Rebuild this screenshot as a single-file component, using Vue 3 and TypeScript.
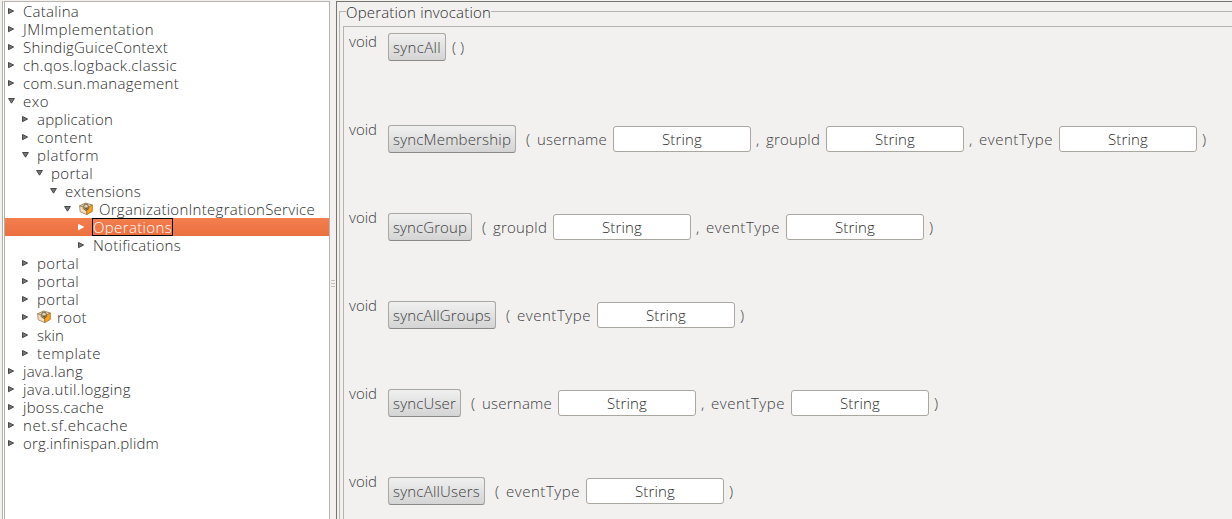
<script setup lang="ts">
interface TreeNode {
  label: string
  depth: number
  width: number
  open?: boolean
  bean?: boolean
  selected?: boolean
}

interface Param {
  name: string
  width: number
}

interface Operation {
  name: string
  width: number
  params: Param[]
}

const nodes: TreeNode[] = [
  { label: 'Catalina', depth: 0, width: 56 },
  { label: 'JMImplementation', depth: 0, width: 131 },
  { label: 'ShindigGuiceContext', depth: 0, width: 145 },
  { label: 'ch.qos.logback.classic', depth: 0, width: 154 },
  { label: 'com.sun.management', depth: 0, width: 156 },
  { label: 'exo', depth: 0, width: 26, open: true },
  { label: 'application', depth: 1, width: 76 },
  { label: 'content', depth: 1, width: 56 },
  { label: 'platform', depth: 1, width: 62, open: true },
  { label: 'portal', depth: 2, width: 42, open: true },
  { label: 'extensions', depth: 3, width: 76, open: true },
  { label: 'OrganizationIntegrationService', depth: 4, width: 216, open: true, bean: true },
  { label: 'Operations', depth: 5, width: 79, selected: true },
  { label: 'Notifications', depth: 5, width: 88 },
  { label: 'portal', depth: 1, width: 42 },
  { label: 'portal', depth: 1, width: 42 },
  { label: 'portal', depth: 1, width: 42 },
  { label: 'root', depth: 1, width: 30, bean: true },
  { label: 'skin', depth: 1, width: 27 },
  { label: 'template', depth: 1, width: 64 },
  { label: 'java.lang', depth: 0, width: 60 },
  { label: 'java.util.logging', depth: 0, width: 108 },
  { label: 'jboss.cache', depth: 0, width: 81 },
  { label: 'net.sf.ehcache', depth: 0, width: 105 },
  { label: 'org.infinispan.plidm', depth: 0, width: 136 },
]

const username: Param = { name: 'username', width: 70 }
const groupId: Param = { name: 'groupId', width: 54 }
const eventType: Param = { name: 'eventType', width: 74 }

const operations: Operation[] = [
  { name: 'syncAll', width: 48, params: [] },
  { name: 'syncMembership', width: 118, params: [username, groupId, eventType] },
  { name: 'syncGroup', width: 74, params: [groupId, eventType] },
  { name: 'syncAllGroups', width: 98, params: [eventType] },
  { name: 'syncUser', width: 63, params: [username, eventType] },
  { name: 'syncAllUsers', width: 87, params: [eventType] },
]

// Spreads the letters of a label so that it takes up the given width.
const vFit = {
  mounted(el: HTMLElement, binding: { value: number }) {
    const count = (el.textContent ?? '').length
    const natural = el.getBoundingClientRect().width
    el.style.letterSpacing = `${(binding.value - natural) / count}px`
  },
}
</script>

<template>
  <div class="window">
    <div class="tree">
      <div
        v-for="(node, i) in nodes"
        :key="i"
        class="node"
        :class="{ selected: node.selected }"
        :style="{ paddingLeft: `${node.depth * 14 + 2}px` }"
      >
        <svg class="arrow" width="9" height="9" viewBox="0 0 9 9">
          <path v-if="node.open" d="M1.6 1.5H7.4L4.5 6.2Z" />
          <path v-else d="M1.5 1.5L6.6 4L1.5 6.7Z" />
        </svg>
        <svg v-if="node.bean" class="bean" width="14" height="14" viewBox="0 0 14 14">
          <path d="M.6 3.8L6.5 1L13.3 3L7.8 6.4Z" fill="#e9d3ad" stroke="#8d754e" stroke-width=".8" />
          <path d="M.6 3.8L7.8 6.4V12.6L1.2 9.8Z" fill="#f3dfbd" stroke="#98805a" stroke-width=".8" />
          <path d="M7.8 6.4L13.3 3V9.4L7.8 12.6Z" fill="#fba31b" stroke="#a87014" stroke-width=".8" />
          <circle cx="7" cy="4.4" r="2.3" fill="#e3d2b0" stroke="#5f503c" stroke-width=".9" />
          <path d="M3.6 6.2L7 8.6L10.2 6.2M7 5V8" fill="none" stroke="#6c5538" stroke-width=".9" />
        </svg>
        <span class="label"><span v-fit="node.width">{{ node.label }}</span></span>
      </div>
    </div>
    <div class="divider"><i /><i /><i /></div>
    <div class="panel">
      <fieldset>
        <legend><span v-fit="145">Operation invocation</span></legend>
        <div class="operations">
          <div v-for="op in operations" :key="op.name" class="operation" :class="{ bare: !op.params.length }">
            <span class="type"><span v-fit="28">void</span></span>
            <button type="button"><span v-fit="op.width">{{ op.name }}</span></button>
            <span v-if="!op.params.length" class="empty">( )</span>
            <template v-else>
              <template v-for="(param, i) in op.params" :key="param.name">
                <span class="sep" :class="{ first: i === 0 }">{{ i === 0 ? '(' : ',' }}</span>
                <span class="name" :style="{ width: `${param.width + 6}px` }">
                  <span v-fit="param.width">{{ param.name }}</span>
                </span>
                <span class="field"><span v-fit="40">String</span></span>
              </template>
              <span class="close">)</span>
            </template>
          </div>
        </div>
      </fieldset>
    </div>
  </div>
</template>

<style>
html,
body {
  overflow: hidden;
  background: #f2f1f0;
}
</style>

<style scoped>
.window {
  box-sizing: border-box;
  width: 1232px;
  height: 519px;
  padding-left: 2px;
  display: flex;
  overflow: hidden;
  background: #f2f1f0;
  color: #2c2c2c;
  font: 300 15px/18px 'Open Sans', 'Noto Sans', sans-serif;
  white-space: nowrap;
}

.tree {
  box-sizing: border-box;
  width: 328px;
  flex: none;
  border-left: 3px double #b3b0aa;
  border-right: 1px solid #b8b5b0;
  background: #fff;
  margin-top: 1px;
  border-top: 1px solid #b8b5b0;
}

.node {
  display: flex;
  height: 18px;
}

.node.selected {
  background: linear-gradient(#f37e4e, #ec7040);
  color: #fff;
}

.arrow {
  flex: none;
  margin: 5px 7px 0 0;
  fill: #777;
  stroke: #484848;
}

.selected .arrow {
  fill: #fff;
  stroke: #fff;
}

.bean {
  flex: none;
  margin: 2px 6px 0 0;
}

.selected .label {
  height: 16px;
  line-height: 16px;
  outline: 1px solid #000;
  margin-top: 1px;
}

.divider {
  width: 6px;
  flex: none;
  display: flex;
  flex-direction: column;
  align-items: center;
  padding-top: 280px;
  gap: 2px;
  box-sizing: border-box;
}

.divider i {
  width: 4px;
  height: 1px;
  background: #c3c0bc;
}

.panel {
  box-sizing: border-box;
  flex: 1;
  height: 540px;
  margin-top: 1px;
  border-left: 1px solid #77756f;
  border-top: 1px solid #77756f;
  padding-left: 2px;
}

fieldset {
  height: 550px;
  box-sizing: border-box;
  margin: 0;
  min-width: 0;
  padding: 5px 0 0 3px;
  border: 1px solid #b8b5b0;
  border-right: 0;
}

legend {
  height: 19px;
  padding: 0;
  margin-left: 3px;
  line-height: 21px;
}

.operations {
  border-left: 1px solid #b8b5b0;
  border-top: 1px solid #b8b5b0;
  height: 530px;
}

.operation {
  display: flex;
  height: 88px;
  padding-left: 5px;
  box-sizing: border-box;
  padding-top: 10px;
  color: #404040;
}

.operation.bare {
  padding-top: 6px;
}

.type {
  width: 39px;
  flex: none;
  margin-top: -5px;
}

.bare .type {
  margin-top: -1px;
}

button {
  box-sizing: border-box;
  height: 28px;
  padding: 0 4px;
  border: 1px solid #aaa8a4;
  border-bottom-color: #8c8a87;
  border-radius: 3px;
  background: linear-gradient(#f0f0f0, #d4d4d4);
  color: inherit;
  font: inherit;
}

.sep,
.name,
.close,
.empty {
  line-height: 28px;
}

.empty {
  margin-left: 6px;
}

.sep {
  width: 10px;
  margin-left: 5px;
}

.sep.first {
  margin-left: 10px;
  width: 11px;
}

.field {
  box-sizing: border-box;
  width: 138px;
  height: 26px;
  margin-top: 1px;
  border: 1px solid #aaa7a1;
  border-radius: 3px;
  background: #fff;
  color: #2c2c2c;
  line-height: 24px;
  text-align: center;
}

.close {
  margin-left: 5px;
}
</style>
